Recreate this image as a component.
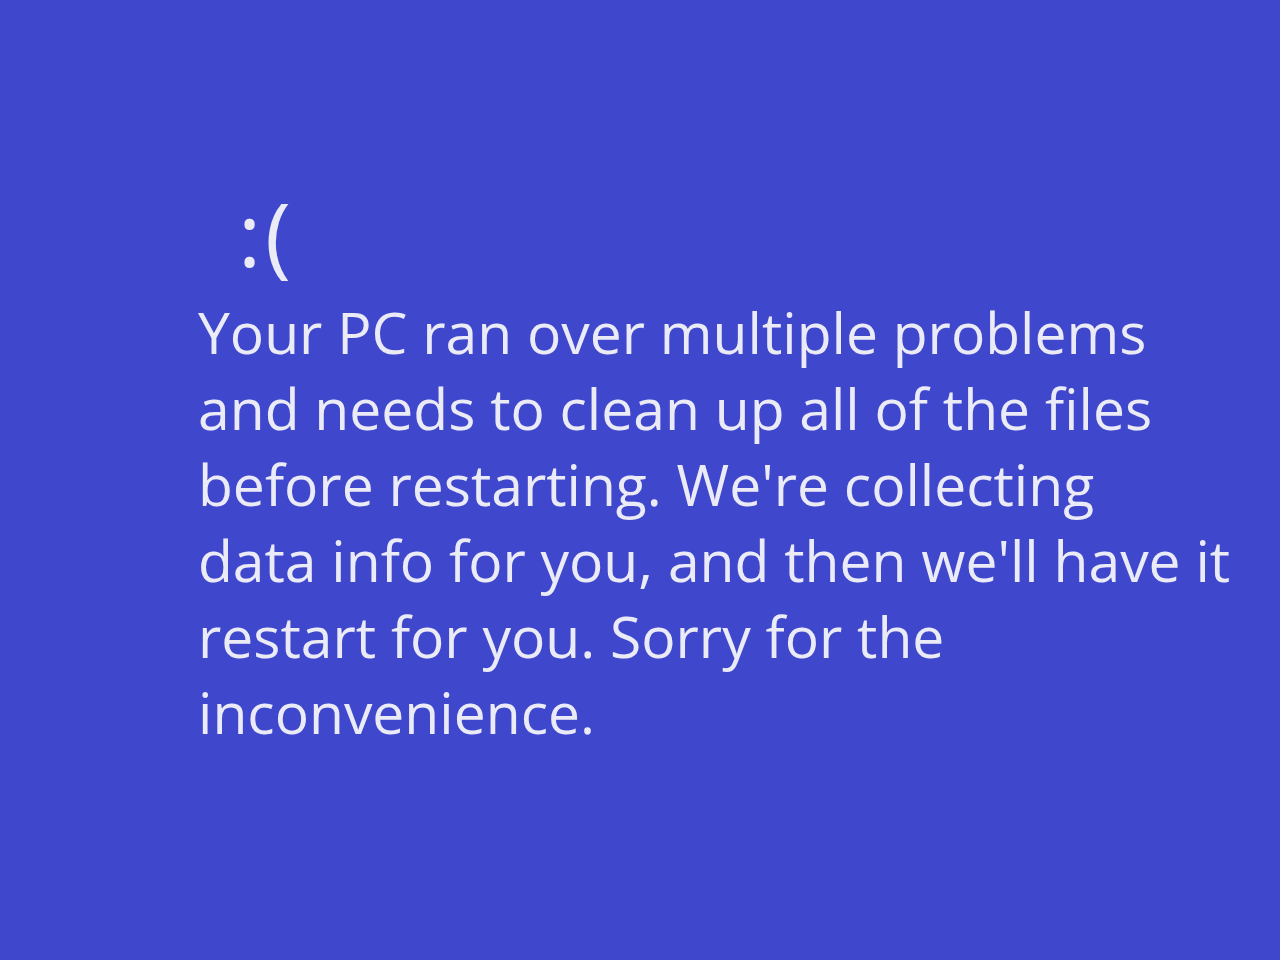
export default function App() {
  const lines = [
    'Your PC ran over multiple problems',
    'and needs to clean up all of the files',
    "before restarting. We're collecting",
    "data info for you, and then we'll have it",
    'restart for you. Sorry for the',
    'inconvenience.',
  ]

  return (
    <div
      className="w-full h-[960px] overflow-hidden bg-[#3f48cc] text-[#ebebf7] pl-[198px] pt-[172px]"
      style={{ fontFamily: '"Open Sans", "Noto Sans", sans-serif' }}
    >
      {/* Frown */}
      <div className="pl-[40px] text-[88px] leading-[122px] tracking-[4px] font-normal">:(</div>

      {/* Message */}
      <div className="text-[57px] leading-[76px] font-normal">
        {lines.map((l) => (
          <div key={l} className="whitespace-nowrap">
            {l}
          </div>
        ))}
      </div>
    </div>
  )
}
